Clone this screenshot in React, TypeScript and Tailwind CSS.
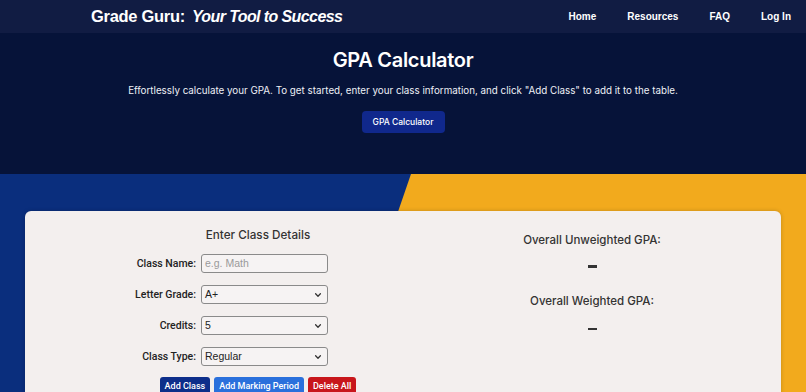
import React from "react";

const Chevron = () => (
  <svg width="8" height="8" viewBox="0 0 10 10" className="absolute right-[5px] top-1/2 -translate-y-1/2">
    <path d="M2 3.5 L5 6.5 L8 3.5" fill="none" stroke="#333" strokeWidth="1.6" strokeLinecap="round" strokeLinejoin="round" />
  </svg>
);

const SelectBox = ({ value }: { value: string }) => (
  <div className="relative w-[127px] h-[19px] border border-[#8a8a8a] rounded-[3px] bg-[#f6f3f3] text-[10.5px] text-[#222] pl-[3px] flex items-center [font-family:'Liberation_Sans',Arial,sans-serif]">
    {value}
    <Chevron />
  </div>
);

const Row = ({ label, children }: { label: string; children: React.ReactNode }) => (
  <div className="flex items-center">
    <span className="w-[83px] text-right text-[10.5px] font-medium text-[#222] [font-family:Roboto,Arial,sans-serif]">{label}</span>
    <div className="ml-[5px]">{children}</div>
  </div>
);

export default function App() {
  return (
    <div className="w-[806px] h-[392px] overflow-hidden bg-[#061339]">
      {/* Navbar */}
      <div className="h-[33px] bg-[#111c43] flex items-center justify-between pl-[91px] pr-[15px]">
        <div className="text-white text-[16.5px] font-bold [font-family:'Liberation_Sans',Arial,sans-serif] tracking-[-0.3px]">
          Grade Guru:<span className="italic ml-[7px] text-[16px] tracking-[-0.6px]">Your Tool to Success</span>
        </div>
        <div className="flex items-center gap-[31px] text-white text-[10px] font-bold [font-family:'Liberation_Sans',Arial,sans-serif]">
          <span>Home</span>
          <span>Resources</span>
          <span>FAQ</span>
          <span>Log In</span>
        </div>
      </div>

      {/* Hero */}
      <div className="h-[141px] bg-[#061339] flex flex-col items-center pt-[13px] [font-family:Inter,sans-serif]">
        <h1 className="text-white text-[20px] font-semibold leading-[28px] tracking-[-0.3px]">GPA Calculator</h1>
        <p className="text-[#eef0f6] text-[9.8px] mt-[10px] leading-[14px]">
          Effortlessly calculate your GPA. To get started, enter your class information, and click "Add Class" to add it to the table.
        </p>
        <button className="mt-[13px] h-[22px] w-[83px] rounded-[4px] bg-[#10288c] text-white text-[8.5px] font-medium">
          GPA Calculator
        </button>
      </div>

      {/* Lower section */}
      <div className="relative h-[218px] bg-[#0a2e7d] pt-[37px]">
        <div className="absolute inset-0 bg-[#f2aa1d] [clip-path:polygon(411px_0,100%_0,100%_100%,336px_100%)]" />
        <div className="relative mx-[25px] h-[200px] rounded-[6px] bg-[#f3efee] shadow-[0_0_4px_rgba(0,0,0,0.2)] grid grid-cols-2">
          {/* Left column */}
          <div className="pl-[88px] pt-[16px] flex flex-col items-center">
            <div className="text-[11.7px] font-medium text-[#333] [font-family:Inter,sans-serif] leading-[16px]">Enter Class Details</div>
            <div className="self-start mt-[11px] flex flex-col gap-[12px] [font-family:'Liberation_Sans',Arial,sans-serif]">
              <Row label="Class Name:">
                <div className="w-[127px] h-[19px] border border-[#8a8a8a] rounded-[3px] bg-[#f6f3f3] text-[10.5px] text-[#9a9a9a] pl-[3px] flex items-center">e.g. Math</div>
              </Row>
              <Row label="Letter Grade:">
                <SelectBox value="A+" />
              </Row>
              <Row label="Credits:">
                <SelectBox value="5" />
              </Row>
              <Row label="Class Type:">
                <SelectBox value="Regular" />
              </Row>
            </div>
            <div className="mt-[11px] flex gap-[4px] text-white text-[9px] font-medium [font-family:Roboto,Arial,sans-serif]">
              <button className="h-[20px] px-[5px] rounded-[3px] bg-[#0d2e8a]">Add Class</button>
              <button className="h-[20px] px-[5px] rounded-[3px] bg-[#2a70dc]">Add Marking Period</button>
              <button className="h-[20px] px-[5px] rounded-[3px] bg-[#c8161b]">Delete All</button>
            </div>
          </div>
          {/* Right column */}
          <div className="pt-[21px] flex flex-col items-center text-[#333] [font-family:Inter,sans-serif]">
            <div className="text-[11.5px] font-medium leading-[16px]">Overall Unweighted GPA:</div>
            <div className="mt-[17px] w-[9px] h-[2.5px] bg-[#333]" />
            <div className="mt-[25px] text-[11.5px] font-medium leading-[16px]">Overall Weighted GPA:</div>
            <div className="mt-[19px] w-[9px] h-[2.5px] bg-[#333]" />
          </div>
        </div>
      </div>
    </div>
  );
}
